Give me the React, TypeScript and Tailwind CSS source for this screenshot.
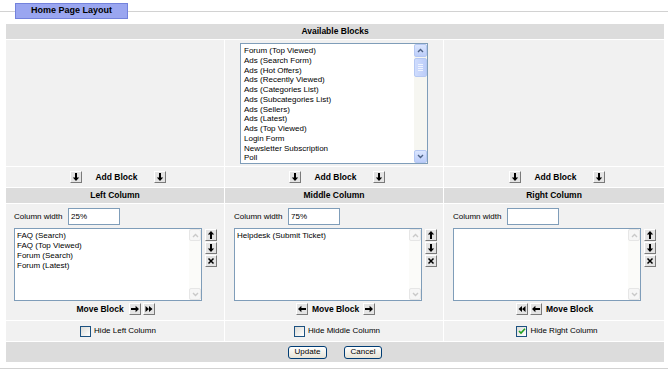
import React from "react";

type IconKind = "up" | "down" | "right" | "left" | "ff" | "rew" | "x";

function Icon({ kind }: { kind: IconKind }) {
  if (kind === "x") {
    return (
      <svg width="10" height="10" viewBox="0 0 10 10">
        <path d="M2.5 2.5 L7.5 7.5 M7.5 2.5 L2.5 7.5" stroke="#000" strokeWidth="1.5" />
      </svg>
    );
  }
  const d: Record<string, string> = {
    up: "M5 1 L1.8 4.4 H4 V9 H6 V4.4 H8.2 Z",
    down: "M5 9 L1.8 5.6 H4 V1 H6 V5.6 H8.2 Z",
    right: "M9 5 L5.6 1.8 V4 H1 V6 H5.6 V8.2 Z",
    left: "M1 5 L4.4 1.8 V4 H9 V6 H4.4 V8.2 Z",
    ff: "M1.5 2 L5 5 L1.5 8 Z M5 2 L8.5 5 L5 8 Z",
    rew: "M8.5 2 L5 5 L8.5 8 Z M5 2 L1.5 5 L5 8 Z",
  };
  return (
    <svg width="10" height="10" viewBox="0 0 10 10">
      <path d={d[kind]} fill="#000" />
    </svg>
  );
}

function SmallBtn({ kind }: { kind: IconKind }) {
  return (
    <div className="w-[12px] h-[12px] shrink-0 bg-[#e4e4e4] border border-t-white border-l-white border-r-[#7a7a7a] border-b-[#7a7a7a] flex items-center justify-center">
      <Icon kind={kind} />
    </div>
  );
}

function Chevron({ dir, color }: { dir: "up" | "down"; color: string }) {
  return (
    <svg width="7" height="5" viewBox="0 0 7 5">
      <path
        d={dir === "up" ? "M1 4 L3.5 1.5 L6 4" : "M1 1 L3.5 3.5 L6 1"}
        stroke={color}
        strokeWidth="1.4"
        fill="none"
      />
    </svg>
  );
}

function XPScrollBtn({ dir }: { dir: "up" | "down" }) {
  return (
    <div className="h-[13px] rounded-[2px] border border-[#b5c8f3] bg-linear-to-b from-[#dbe6fe] to-[#bccdf9] flex items-center justify-center">
      <Chevron dir={dir} color="#4d6185" />
    </div>
  );
}

function ActiveScroll() {
  return (
    <div className="w-[13px] h-full flex flex-col bg-[#f6f6f1]">
      <XPScrollBtn dir="up" />
      <div className="mt-px h-[19px] rounded-[2px] border border-[#b5c8f3] bg-linear-to-r from-[#cfdcfd] to-[#bccdf9] flex flex-col items-center justify-center gap-px">
        <div className="w-[5px] h-px bg-[#eef3fe]" />
        <div className="w-[5px] h-px bg-[#eef3fe]" />
        <div className="w-[5px] h-px bg-[#eef3fe]" />
        <div className="w-[5px] h-px bg-[#eef3fe]" />
      </div>
      <div className="flex-1" />
      <XPScrollBtn dir="down" />
    </div>
  );
}

function DisabledScrollBtn({ dir }: { dir: "up" | "down" }) {
  return (
    <div className="h-[12px] rounded-[2px] border border-[#e6e6e6] bg-[#f6f6f6] flex items-center justify-center">
      <Chevron dir={dir} color="#c9c9c9" />
    </div>
  );
}

function DisabledScroll() {
  return (
    <div className="w-[12px] h-full flex flex-col justify-between bg-[#fbfbf9]">
      <DisabledScrollBtn dir="up" />
      <DisabledScrollBtn dir="down" />
    </div>
  );
}

function ColumnList({ items }: { items: string[] }) {
  return (
    <div className="w-[188px] h-[73px] flex border border-[#7f9db9] bg-white">
      <div className="flex-1 pl-[2px] pt-[2px] text-[8px] leading-[10px]">
        {items.map((t) => (
          <div key={t}>{t}</div>
        ))}
      </div>
      <DisabledScroll />
    </div>
  );
}

function Checkbox({ checked }: { checked?: boolean }) {
  return (
    <div className="w-[11px] h-[11px] border border-[#1c5180] bg-linear-to-br from-[#dcdcd7] to-white flex items-center justify-center">
      {checked && (
        <svg width="8" height="8" viewBox="0 0 8 8">
          <path d="M1 4 L3 6 L7 1.8" stroke="#21a121" strokeWidth="1.6" fill="none" />
        </svg>
      )}
    </div>
  );
}

function AddBlockCell() {
  return (
    <div className="bg-[#f1f1f1] flex items-center justify-center pl-[6px]">
      <SmallBtn kind="down" />
      <span className="ml-[13px] mr-[16px] font-bold text-[8.5px]">Add Block</span>
      <SmallBtn kind="down" />
    </div>
  );
}

function HeaderCell({ label }: { label: string }) {
  return (
    <div className="bg-[#dcdcdc] flex items-center justify-center font-bold text-[8.5px]">{label}</div>
  );
}

function BodyCell({
  width,
  items,
  pad,
  move,
}: {
  width: string;
  items: string[];
  pad: string;
  move: React.ReactNode;
}) {
  return (
    <div className={`bg-[#f1f1f1] pt-[4px] flex flex-col ${pad}`}>
      <div className="flex items-center h-[17px]">
        <span className="text-[8px] w-[54px] shrink-0 whitespace-nowrap">Column width</span>
        <div className="w-[52px] h-[17px] border border-[#7f9db9] bg-white text-[8px] pl-[2px] flex items-center">
          {width}
        </div>
      </div>
      <div className="flex gap-[3px] mt-[3px]">
        <ColumnList items={items} />
        <div className="flex flex-col gap-px mt-px">
          <SmallBtn kind="up" />
          <SmallBtn kind="down" />
          <SmallBtn kind="x" />
        </div>
      </div>
      <div className="flex items-center justify-center h-[12px] mt-[2px]">{move}</div>
    </div>
  );
}

function HideCell({ label, checked }: { label: string; checked?: boolean }) {
  return (
    <div className="bg-[#f1f1f1] flex items-center justify-center pl-[6px] gap-[3px]">
      <Checkbox checked={checked} />
      <span className="text-[8px]">{label}</span>
    </div>
  );
}

function XPButton({ label, w }: { label: string; w: string }) {
  return (
    <div
      className={`${w} h-[13px] rounded-[3px] border border-[#003c74] bg-linear-to-b from-white to-[#e6e3d6] flex items-center justify-center text-[8px]`}
    >
      {label}
    </div>
  );
}

const blocks = [
  "Forum (Top Viewed)",
  "Ads (Search Form)",
  "Ads (Hot Offers)",
  "Ads (Recently Viewed)",
  "Ads (Categories List)",
  "Ads (Subcategories List)",
  "Ads (Sellers)",
  "Ads (Latest)",
  "Ads (Top Viewed)",
  "Login Form",
  "Newsletter Subscription",
  "Poll",
];

const GRID = "grid grid-cols-[218px_218px_220px] gap-px";

export default function App() {
  return (
    <div className="font-['Liberation_Sans',Arial,sans-serif] w-[668px] h-[372px] bg-white text-black overflow-hidden">
      <div className="flex items-center pt-[3px] h-[19px]">
        <div className="w-[15px] h-px bg-[#d2d2d2]" />
        <div className="w-[113px] h-[16px] bg-[#9aa6f0] border border-[#7382dc] flex items-center justify-center text-[9px] font-bold">
          Home Page Layout
        </div>
        <div className="flex-1 h-px bg-[#d2d2d2]" />
      </div>

      <div className="ml-[6px] mt-[5px] w-[658px] flex flex-col gap-px">
        <div className="h-[15px] bg-[#dcdcdc] flex items-center justify-center font-bold text-[8.5px]">
          Available Blocks
        </div>

        <div className={`${GRID} h-[126px]`}>
          <div className="bg-[#f1f1f1]" />
          <div className="bg-[#f1f1f1] flex justify-center pt-[3px]">
            <div className="w-[188px] h-[121px] flex border border-[#7f9db9] bg-white">
              <div className="flex-1 pl-[3px] pt-[2px] text-[8px] leading-[9.75px]">
                {blocks.map((b) => (
                  <div key={b}>{b}</div>
                ))}
              </div>
              <ActiveScroll />
            </div>
          </div>
          <div className="bg-[#f1f1f1]" />
        </div>

        <div className={`${GRID} h-[20px]`}>
          <AddBlockCell />
          <AddBlockCell />
          <AddBlockCell />
        </div>

        <div className={`${GRID} h-[15px]`}>
          <HeaderCell label="Left Column" />
          <HeaderCell label="Middle Column" />
          <HeaderCell label="Right Column" />
        </div>

        <div className={`${GRID} h-[116px]`}>
          <BodyCell
            width="25%"
            pad="pl-[8px] pr-[7px]"
            items={["FAQ (Search)", "FAQ (Top Viewed)", "Forum (Search)", "Forum (Latest)"]}
            move={
              <>
                <span className="font-bold text-[8.5px] mr-[5px]">Move Block</span>
                <SmallBtn kind="right" />
                <div className="w-[2px]" />
                <SmallBtn kind="ff" />
              </>
            }
          />
          <BodyCell
            width="75%"
            pad="pl-[9px] pr-[6px]"
            items={["Helpdesk (Submit Ticket)"]}
            move={
              <>
                <SmallBtn kind="left" />
                <span className="font-bold text-[8.5px] mx-[4px]">Move Block</span>
                <SmallBtn kind="right" />
              </>
            }
          />
          <BodyCell
            width=""
            pad="pl-[9px] pr-[8px]"
            items={[]}
            move={
              <>
                <SmallBtn kind="rew" />
                <div className="w-[2px]" />
                <SmallBtn kind="left" />
                <span className="font-bold text-[8.5px] ml-[4px]">Move Block</span>
              </>
            }
          />
        </div>

        <div className={`${GRID} h-[20px]`}>
          <HideCell label="Hide Left Column" />
          <HideCell label="Hide Middle Column" />
          <HideCell label="Hide Right Column" checked />
        </div>

        <div className="h-[20px] bg-[#dcdcdc] flex items-center justify-center gap-[17px]">
          <XPButton label="Update" w="w-[39px]" />
          <XPButton label="Cancel" w="w-[38px]" />
        </div>
      </div>

      <div className="mt-[6px] h-px bg-[#d2d2d2]" />
    </div>
  );
}
